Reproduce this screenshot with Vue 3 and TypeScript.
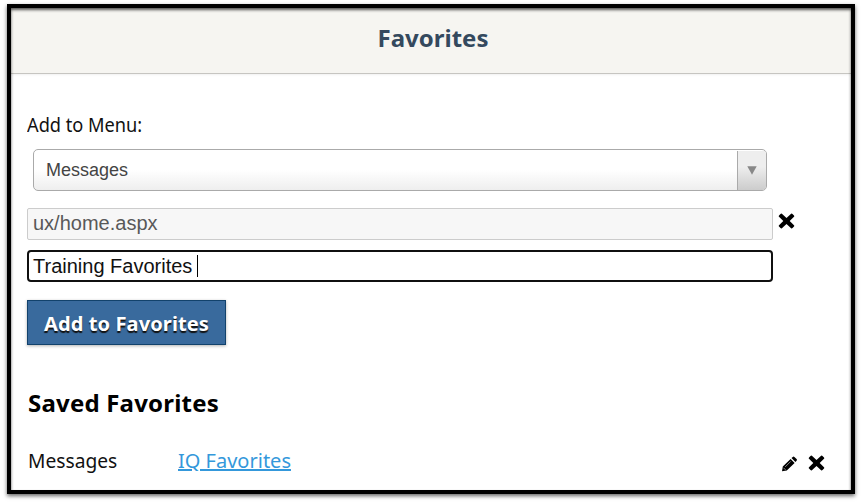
<script setup lang="ts">
import { ref } from 'vue'

interface Favorite {
  menu: string
  title: string
}

const menu = ref('Messages')
const address = ref('ux/home.aspx')
const title = ref('Training Favorites')
const favorites = ref<Favorite[]>([{ menu: 'Messages', title: 'IQ Favorites' }])
const cross =
  'M3.9 .8 L8.5 5 L13.1 .8 Q13.8 .2 14.5 .9 L16 2.4 Q16.7 3.1 16 3.8 L11.7 8 L16 12.2 Q16.7 12.9 16 13.6 L14.5 15.1 Q13.8 15.8 13.1 15.2 L8.5 11 L3.9 15.2 Q3.2 15.8 2.5 15.1 L1 13.6 Q.3 12.9 1 12.2 L5.3 8 L1 3.8 Q.3 3.1 1 2.4 L2.5 .9 Q3.2 .2 3.9 .8 Z'
</script>

<template>
  <div class="page">
    <main class="frame">
      <header class="header"><h1>Favorites</h1></header>
      <section class="content">
        <div class="label"><span>Add to Menu:</span></div>
        <div class="select">
          <span class="value">{{ menu }}</span>
          <span class="toggle"><svg width="10" height="9" viewBox="0 0 10 9"><path d="M.3 .3H9.7L5 8.7Z" fill="#888" /></svg></span>
        </div>
        <div class="address-row">
          <div class="field disabled">{{ address }}</div>
          <svg class="cross" width="17" height="16" viewBox="0 0 17 16"><path :d="cross" /></svg>
        </div>
        <div class="field active"><span>{{ title }}</span><i class="caret"></i></div>
        <button class="add">Add to Favorites</button>
        <h2>Saved Favorites</h2>
        <div v-for="item in favorites" :key="item.title" class="saved">
          <div class="menu"><span>{{ item.menu }}</span></div>
          <a class="link">{{ item.title }}</a>
          <svg class="pencil" width="17" height="16" viewBox="0 0 17 16">
            <path d="M1 15.2L1.8 10.6L9.6 3L13.6 6.9L5.8 14.5Z M10.5 2.1L11.8 .9Q12.6 .2 13.4 1L15.6 3.1Q16.4 3.9 15.6 4.8L14.4 6Z" />
            <path d="M2.5 11.8L4.6 13.9M4.2 10.9L9.7 5.4" class="shine" />
          </svg>
          <svg class="cross" width="17" height="16" viewBox="0 0 17 16"><path :d="cross" /></svg>
        </div>
      </section>
    </main>
  </div>
</template>

<style>
body {
  background: #fff;
}
</style>

<style scoped>
.page {
  box-sizing: border-box;
  width: 861px;
  height: 502px;
  padding: 4px 6px 8px 7px;
}
.frame {
  box-sizing: border-box;
  height: 490px;
  border: 4px solid #000;
  background: #fff;
  box-shadow: 0 2px 4px rgba(0, 0, 0, 0.6);
  font-family: 'Noto Sans', sans-serif;
  color: #111;
  position: relative;
  display: flex;
  flex-direction: column;
}
.frame::after {
  content: '';
  position: absolute;
  inset: 0;
  box-shadow: inset 0 2px 3px rgba(0, 0, 0, 0.65);
  pointer-events: none;
}
.header {
  box-sizing: border-box;
  height: 66px;
  background: #f6f5f1;
  border-bottom: 1px solid #c6c5c1;
  box-shadow: 0 1px 2px rgba(0, 0, 0, 0.06);
  text-align: center;
  padding-left: 4px;
}
h1 {
  margin: 0;
  font-size: 24px;
  line-height: 59px;
  color: #34495e;
}
.content {
  padding: 37px 16px 0;
  display: flex;
  flex-direction: column;
}
.label {
  font-size: 20px;
  line-height: 28px;
  height: 38px;
}
.label span {
  display: inline-block;
  transform: scaleX(0.91);
  transform-origin: left;
}
.select {
  box-sizing: border-box;
  width: 734px;
  height: 42px;
  margin-left: 6px;
  border: 1px solid #aaa;
  border-radius: 5px;
  background: linear-gradient(#fff 50%, #eee);
  display: flex;
  overflow: hidden;
  font: 18px/40px 'Liberation Sans', sans-serif;
  color: #444;
}
.value {
  flex: 1;
  padding-left: 12px;
}
.toggle {
  width: 28px;
  margin-top: 1px;
  border-left: 1px solid #aaa;
  background: linear-gradient(#eee 40%, #ccc);
  display: flex;
  align-items: center;
  justify-content: center;
}
.address-row {
  display: flex;
  gap: 5px;
  margin-top: 17px;
}
.address-row .cross {
  margin-top: 5px;
}
.field {
  box-sizing: border-box;
  width: 746px;
  height: 32px;
  border: 1px solid #ccc;
  border-radius: 2px;
  padding-left: 5px;
  font: 20px/29px 'Liberation Sans', sans-serif;
  display: flex;
}
.disabled {
  background: #f7f7f7;
  color: #595959;
}
.active {
  border: 2px solid #101010;
  border-radius: 4px;
  margin-top: 10px;
  padding-left: 4px;
  line-height: 28px;
}
.caret {
  width: 1px;
  height: 22px;
  margin: 3px 0 0 5px;
  background: #000;
}
.add {
  box-sizing: border-box;
  width: 199px;
  height: 45px;
  margin-top: 18px;
  padding: 2px 0 0;
  border: 1px solid #12426c;
  background: #396a9d;
  box-shadow: 0 1px 3px rgba(0, 0, 0, 0.3);
  color: #fff;
  font: bold 20px/40px 'Noto Sans', sans-serif;
  letter-spacing: 0.12px;
  text-shadow: 0 2px 1px #111;
}
h2 {
  margin: 42px 0 0 1px;
  font-size: 24px;
  line-height: 32px;
  letter-spacing: 0.2px;
  color: #000;
}
.saved {
  display: flex;
  align-items: flex-start;
  margin: 28px 10px 0 1px;
  font-size: 20px;
  line-height: 28px;
}
.menu {
  width: 150px;
}
.menu span {
  display: inline-block;
  transform: scaleX(0.96);
  transform-origin: left;
}
.link {
  color: #3498db;
  text-decoration: underline;
  text-decoration-thickness: 2px;
  text-decoration-skip-ink: auto;
}
.cross {
  flex: none;
}
.saved .pencil {
  margin: 9px 10px 0 auto;
}
.saved .cross {
  margin-top: 8px;
}
.shine {
  stroke: #aaa;
  stroke-width: 0.8;
  fill: none;
}
</style>
